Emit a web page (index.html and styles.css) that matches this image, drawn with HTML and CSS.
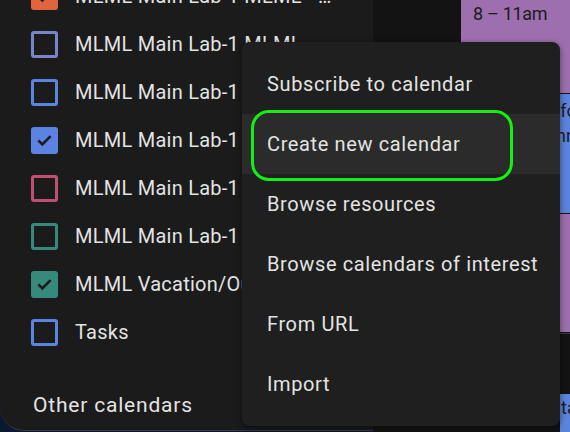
FILE: index.html
```html
<!DOCTYPE html>
<html>
<head>
<meta charset="utf-8">
<link rel="stylesheet" href="styles.css">
</head>
<body>
<div class="app">
  <aside class="sidebar">
    <ul class="cal-list">
      <li class="cal-row"><span class="box checked c-tomato"><svg viewBox="0 0 24 24"><path d="M5 12.5l4.5 4.5L19 7.5"/></svg></span><span class="cal-name">MLML Main Lab-1 MLML - Boats and Vehicles</span></li>
      <li class="cal-row"><span class="box c-lavender"></span><span class="cal-name">MLML Main Lab-1 MLML - Conference Room</span></li>
      <li class="cal-row"><span class="box c-blue"></span><span class="cal-name">MLML Main Lab-1 Seminar Room</span></li>
      <li class="cal-row"><span class="box checked c-blue"><svg viewBox="0 0 24 24"><path d="M5 12.5l4.5 4.5L19 7.5"/></svg></span><span class="cal-name">MLML Main Lab-1 Classroom</span></li>
      <li class="cal-row"><span class="box c-flamingo"></span><span class="cal-name">MLML Main Lab-1 Wet Lab</span></li>
      <li class="cal-row"><span class="box c-teal"></span><span class="cal-name">MLML Main Lab-1 Dry Lab</span></li>
      <li class="cal-row"><span class="box checked c-teal"><svg viewBox="0 0 24 24"><path d="M5 12.5l4.5 4.5L19 7.5"/></svg></span><span class="cal-name">MLML Vacation/Out of Office</span></li>
      <li class="cal-row"><span class="box c-blue"></span><span class="cal-name">Tasks</span></li>
    </ul>
    <div class="section-title">Other calendars</div>
  </aside>
  <div class="gutter"></div>
  <div class="events">
    <div class="event ev-purple ev-top"><span class="ev-time">8 – 11am</span></div>
    <div class="event ev-blue ev-mid"><span class="ev-line">Field survey for</span><span class="ev-line">Seminar planning</span></div>
    <div class="event ev-purple ev-mid2"></div>
    <div class="rule"></div>
    <div class="spacer"></div>
    <div class="event ev-blue ev-bottom"><span class="ev-line">ta</span></div>
  </div>

  <div class="menu">
    <div class="menu-item">Subscribe to calendar</div>
    <div class="menu-item hovered">Create new calendar</div>
    <div class="menu-item">Browse resources</div>
    <div class="menu-item">Browse calendars of interest</div>
    <div class="menu-item">From URL</div>
    <div class="menu-item">Import</div>
  </div>
</div>
</body>
</html>
```

FILE: styles.css
```css
*, *::before, *::after { box-sizing: border-box; }

html, body {
  margin: 0;
  padding: 0;
}

body {
  width: 570px;
  height: 432px;
  overflow: hidden;
  background: #0c1730;
  font-family: Roboto, "Liberation Sans", sans-serif;
  color: #e3e3e3;
}

.app {
  position: relative;
  display: flex;
  width: 570px;
  height: 432px;
}

.sidebar {
  width: 373px;
  height: 431px;
  flex: none;
  background: #1b1b1b;
  border-bottom-left-radius: 24px;
  border-bottom: 1px solid #3a3a3a;
  overflow: hidden;
}

.cal-list {
  list-style: none;
  margin: -28px 0 0 0;
  padding: 0;
}

.cal-row {
  display: flex;
  align-items: center;
  height: 48px;
  padding-left: 31px;
  gap: 17px;
  font-size: 20px;
  letter-spacing: 0.25px;
  white-space: nowrap;
}

.cal-name {
  max-width: 262px;
  overflow: hidden;
  text-overflow: ellipsis;
}

.box {
  flex: none;
  width: 27px;
  height: 27px;
  border: 3px solid currentColor;
  border-radius: 3px;
  display: flex;
  align-items: center;
  justify-content: center;
}

.box svg {
  width: 22px;
  height: 22px;
  fill: none;
  stroke: #1b1b1b;
  stroke-width: 3;
}

.checked.c-tomato { background: #e0653e; }
.checked.c-blue { background: #5b84e2; }
.checked.c-teal { background: #358a7d; }

.c-tomato { color: #e0653e; }
.c-lavender { color: #7a85c8; }
.c-blue { color: #5b84e2; }
.c-flamingo { color: #c24f72; }
.c-teal { color: #358a7d; }

.section-title {
  margin-top: 25px;
  padding-left: 33px;
  font-size: 21px;
  letter-spacing: 0.8px;
  line-height: 48px;
}

.gutter {
  width: 88px;
  flex: none;
  background: #131313;
}

.events {
  width: 109px;
  flex: none;
  display: flex;
  flex-direction: column;
  background: #131313;
}

.event {
  display: flex;
  flex-direction: column;
  padding-left: 12px;
  color: #1d1b20;
  font-size: 18px;
  white-space: nowrap;
  overflow: hidden;
}

.ev-purple { background: #9e6fae; }
.ev-blue { background: #5b84dd; }

.ev-top {
  height: 93px;
  padding-top: 2px;
}

.ev-time {
  line-height: 24px;
  letter-spacing: -0.3px;
}

.ev-mid {
  height: 119px;
  margin-top: 1px;
  padding-left: 0;
  padding-top: 4px;
}

.ev-line { line-height: 25px; }

.ev-mid2 {
  height: 118px;
  margin-top: 1px;
}

.rule {
  height: 1px;
  margin-top: 1px;
  background: #3c3c3c;
}

.spacer {
  height: 60px;
}

.ev-bottom {
  flex: 1;
  margin-left: 99px;
  padding-left: 1px;
  padding-top: 1px;
}

.menu {
  position: absolute;
  left: 242px;
  top: 42px;
  width: 318px;
  padding: 12px 0;
  background: #1e1f1e;
  border-radius: 8px;
  box-shadow: 0 2px 6px rgba(0, 0, 0, 0.5);
}

.menu-item {
  position: relative;
  height: 60px;
  display: flex;
  align-items: center;
  padding-left: 25px;
  font-size: 20px;
  letter-spacing: 0.62px;
  color: #e3e3e3;
}

.menu-item.hovered {
  background: #2a2b2a;
}

.menu-item.hovered::after {
  content: "";
  position: absolute;
  left: 9px;
  top: -4px;
  width: 262px;
  height: 71px;
  border: 3px solid #14f014;
  border-radius: 18px;
}
```
